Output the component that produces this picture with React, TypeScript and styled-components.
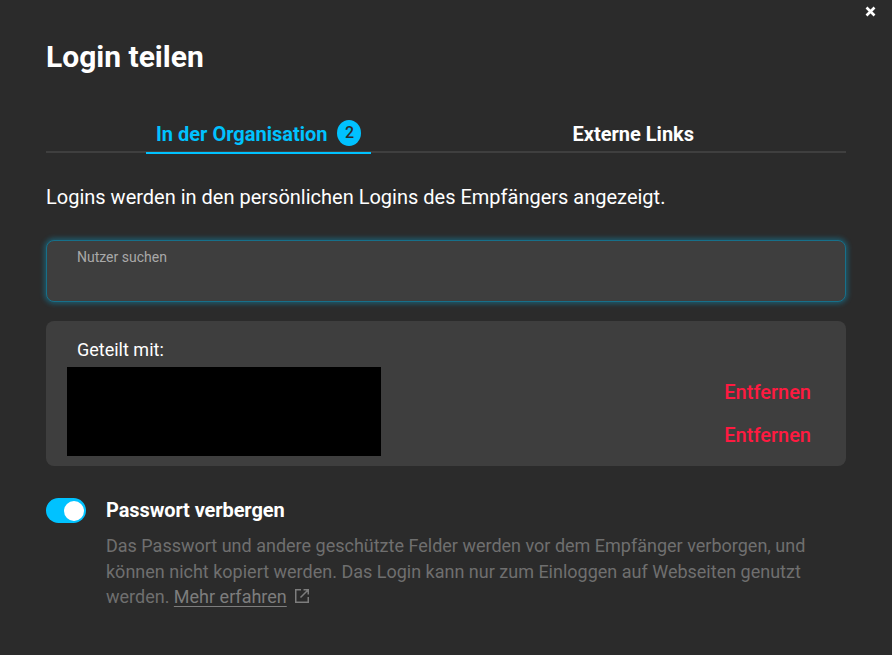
import styled, { createGlobalStyle } from 'styled-components';

const GlobalStyle = createGlobalStyle`
  html, body {
    margin: 0;
    height: 100%;
    background: #2b2b2b;
    font-family: Roboto, "Liberation Sans", sans-serif;
  }
`;

const Dialog = styled.div`
  position: relative;
  box-sizing: border-box;
  width: 892px;
  height: 655px;
  padding: 39px 46px 0;
  overflow: hidden;
  background: #2b2b2b;
  color: #fff;
`;

const CloseButton = styled.button`
  position: absolute;
  top: 5px;
  right: 15px;
  display: flex;
  width: 13px;
  height: 13px;
  padding: 0;
  border: 0;
  background: none;
  color: #fff;
`;

const Title = styled.h1`
  margin: 0;
  font-size: 30px;
  line-height: 36px;
  font-weight: 700;
`;

const Tabs = styled.div`
  display: flex;
  gap: 191px;
  margin-top: 40px;
  padding-left: 100px;
  border-bottom: 2px solid #3f3f3f;
  height: 36px;
`;

const Tab = styled.div<{ $active?: boolean }>`
  display: flex;
  align-items: flex-start;
  gap: 10px;
  box-sizing: border-box;
  height: 39px;
  padding: 7px 10px 0;
  font-size: 20px;
  line-height: 24px;
  font-weight: 700;
  color: ${(p) => (p.$active ? '#00c2ff' : '#fff')};
  border-bottom: ${(p) => (p.$active ? '2px solid #00c2ff' : 'none')};
`;

const Badge = styled.span`
  display: flex;
  align-items: center;
  justify-content: center;
  width: 24px;
  height: 26px;
  margin-top: -2px;
  border-radius: 50%;
  background: #00c2ff;
  color: #2b2b2b;
  font-size: 16px;
  font-weight: 500;
`;

const Intro = styled.p`
  margin: 31px 0 0;
  font-size: 20px;
  line-height: 26px;
  font-weight: 400;
`;

const SearchField = styled.div`
  box-sizing: border-box;
  height: 62px;
  margin-top: 30px;
  padding: 8px 30px 0;
  border: 1px solid #17708a;
  border-radius: 8px;
  background: #3e3e3e;
  box-shadow: 0 0 5px 2px rgba(0, 194, 255, 0.3);
`;

const FieldLabel = styled.label`
  display: block;
  font-size: 14px;
  line-height: 16px;
  color: #a9a9a9;
`;

const SharedPanel = styled.section`
  box-sizing: border-box;
  height: 145px;
  margin-top: 19px;
  padding: 17px 35px 10px 21px;
  border-radius: 8px;
  background: #3e3e3e;
`;

const SharedTitle = styled.div`
  margin-left: 10px;
  font-size: 18px;
  line-height: 24px;
`;

const SharedBody = styled.div`
  display: flex;
  justify-content: space-between;
  margin-top: 5px;
`;

const Redacted = styled.div`
  width: 314px;
  height: 89px;
  background: #000;
`;

const RemoveList = styled.div`
  display: flex;
  flex-direction: column;
  gap: 17px;
  padding-top: 12px;
`;

const RemoveLink = styled.span`
  font-size: 20px;
  line-height: 26px;
  font-weight: 500;
  color: #ff1a40;
`;

const HideRow = styled.div`
  display: flex;
  gap: 20px;
  margin-top: 32px;
`;

const Switch = styled.div`
  display: flex;
  justify-content: flex-end;
  align-items: center;
  box-sizing: border-box;
  flex: none;
  width: 40px;
  height: 25px;
  padding-right: 2px;
  border-radius: 13px;
  background: #00c2ff;
`;

const Knob = styled.span`
  width: 20px;
  height: 20px;
  border-radius: 50%;
  background: #fff;
`;

const HideText = styled.div`
  flex: 1;
`;

const HideTitle = styled.div`
  font-size: 20px;
  line-height: 24px;
  font-weight: 700;
  letter-spacing: -0.1px;
`;

const HideDescription = styled.p`
  margin: 11px 0 0;
  width: 710px;
  font-size: 18px;
  line-height: 25.5px;
  color: #6f6f6f;
`;

const LearnMore = styled.a`
  color: #7d7d7d;
  text-decoration: underline;
  text-underline-offset: 3px;
`;

const ExternalIcon = styled.svg`
  display: inline-block;
  width: 16px;
  height: 16px;
  margin-left: 7px;
  vertical-align: -1px;
  color: #7d7d7d;
`;

export default function App() {
  return (
    <>
      <GlobalStyle />
      <Dialog>
        <CloseButton aria-label="Schließen">
          <svg width="13" height="13" viewBox="0 0 13 13" fill="none">
            <path d="M2.5 2.5l8 8M10.5 2.5l-8 8" stroke="currentColor" strokeWidth="2.6" />
          </svg>
        </CloseButton>
        <Title>Login teilen</Title>
        <Tabs>
          <Tab $active>
            In der Organisation
            <Badge>2</Badge>
          </Tab>
          <Tab>Externe Links</Tab>
        </Tabs>
        <Intro>Logins werden in den persönlichen Logins des Empfängers angezeigt.</Intro>
        <SearchField>
          <FieldLabel>Nutzer suchen</FieldLabel>
        </SearchField>
        <SharedPanel>
          <SharedTitle>Geteilt mit:</SharedTitle>
          <SharedBody>
            <Redacted />
            <RemoveList>
              <RemoveLink>Entfernen</RemoveLink>
              <RemoveLink>Entfernen</RemoveLink>
            </RemoveList>
          </SharedBody>
        </SharedPanel>
        <HideRow>
          <Switch>
            <Knob />
          </Switch>
          <HideText>
            <HideTitle>Passwort verbergen</HideTitle>
            <HideDescription>
              Das Passwort und andere geschützte Felder werden vor dem Empfänger verborgen, und
              können nicht kopiert werden. Das Login kann nur zum Einloggen auf Webseiten genutzt
              werden. <LearnMore>Mehr erfahren</LearnMore>
              <ExternalIcon viewBox="0 0 16 16" fill="none" stroke="currentColor" strokeWidth="1.5">
                <path d="M7 1.75H1.75v12.5h12.5V9M9.5 1.75h4.75V6.5M14 2L6.5 9.5" />
              </ExternalIcon>
            </HideDescription>
          </HideText>
        </HideRow>
      </Dialog>
    </>
  );
}
